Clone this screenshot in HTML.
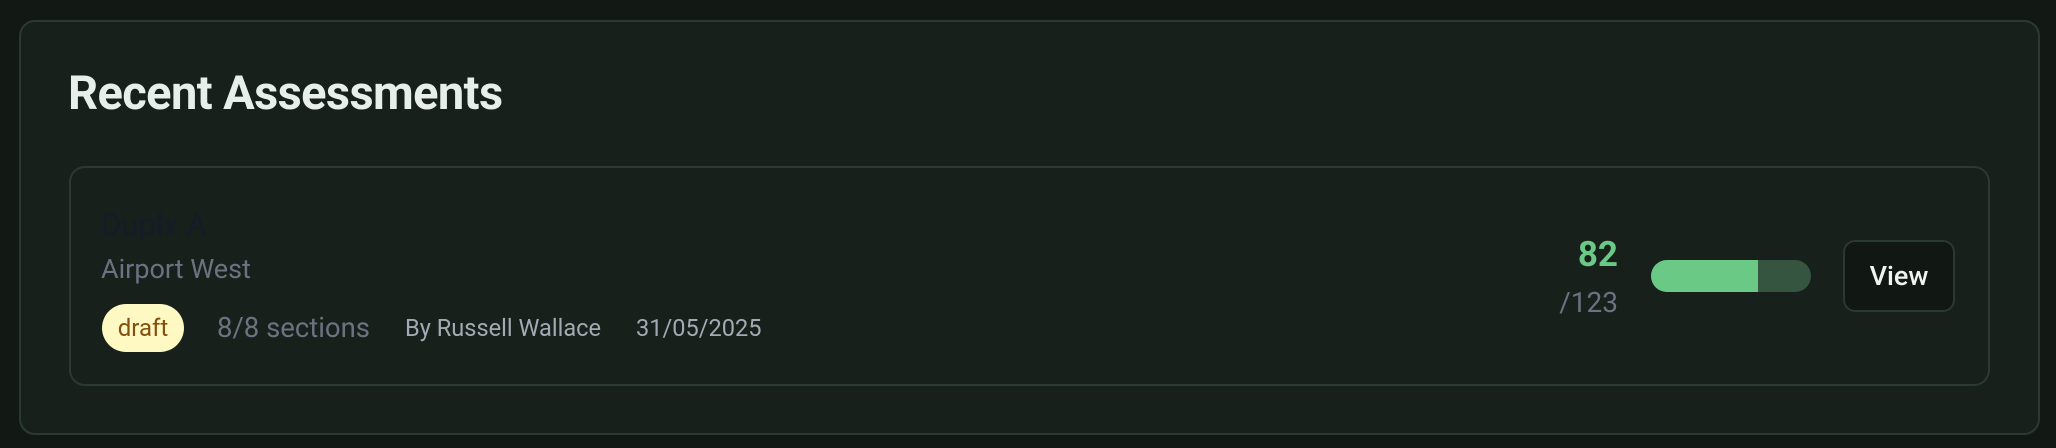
<!DOCTYPE html>
<html><head><style>
*{margin:0;padding:0;box-sizing:border-box}
body{width:2056px;height:448px;background:#121814;font-family:"Roboto","Liberation Sans",sans-serif;position:relative;overflow:hidden}
.outer{position:absolute;left:19px;top:20px;width:2021px;height:415px;background:#17201b;border:2px solid #2b3a30;border-radius:16px}
.title{position:absolute;left:68px;top:64px;font-size:47px;font-weight:bold;color:#e8eee9;letter-spacing:-0.6px;line-height:60px}
.inner{position:absolute;left:69px;top:166px;width:1921px;height:220px;border:2px solid #2b3a30;border-radius:16px}
.t{position:absolute;white-space:nowrap}
</style></head><body>
<div class="outer"></div>
<div class="title">Recent Assessments</div>
<div class="inner"></div>
<div class="t" style="left:101px;top:206px;font-size:31px;color:#151b27">Duplx A</div>
<div class="t" style="left:101px;top:253px;font-size:27px;color:#6b7280">Airport West</div>
<div class="t" style="left:102px;top:304px;width:82px;height:48px;border-radius:24px;background:#fef9c3;color:#854d0e;font-size:24px;line-height:48px;text-align:center">draft</div>
<div class="t" style="left:217px;top:311px;font-size:27.5px;color:#6b7280">8/8 sections</div>
<div class="t" style="left:405px;top:314px;font-size:23.6px;color:#a3aab3">By Russell Wallace</div>
<div class="t" style="left:636px;top:314px;font-size:23.6px;color:#a3aab3">31/05/2025</div>
<div class="t" style="right:438px;top:234px;font-size:35px;font-weight:bold;color:#6bc986">82</div>
<div class="t" style="right:438px;top:286px;font-size:28px;color:#6b7280">/123</div>
<div class="t" style="left:1651px;top:260px;width:160px;height:32px;border-radius:16px;background:#365540;overflow:hidden"><div style="width:107px;height:32px;background:#6bc986"></div></div>
<div class="t" style="left:1843px;top:240px;width:112px;height:72px;border-radius:12px;background:#111814;border:2px solid #2b3a30;color:#f0f3f1;font-size:27px;font-weight:500;line-height:68px;text-align:center">View</div>
</body></html>
